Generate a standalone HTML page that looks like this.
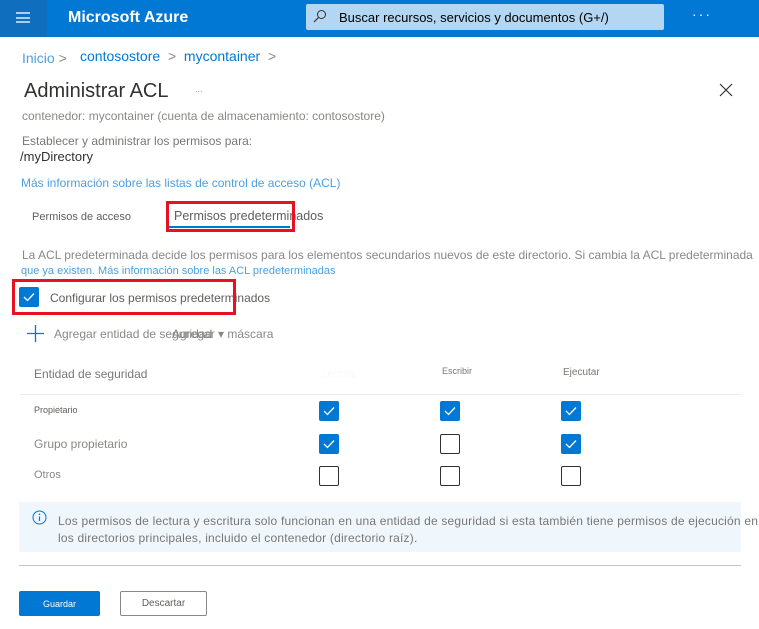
<!DOCTYPE html>
<html><head><meta charset="utf-8"><style>
*{margin:0;padding:0;box-sizing:border-box}
body{width:759px;height:629px;overflow:hidden;background:#fff;font-family:"Liberation Sans",sans-serif;position:relative;color:#323130}
.a{position:absolute;white-space:nowrap}
.cb{position:absolute;width:20px;height:20px;border-radius:2px}
.on{background:#0078d4}
.off{border:1px solid #323130;background:#fff}
.on svg{position:absolute;left:4px;top:5px}
</style></head><body>
<div class="a" style="left:0;top:0;width:759px;height:37px;background:#0078d4"></div>
<div class="a" style="left:0;top:0;width:47px;height:37px;background:#106ebe"></div>
<div class="a" style="left:16px;top:12px;width:14px;height:2px;background:#a9cdee"></div>
<div class="a" style="left:16px;top:17px;width:14px;height:2px;background:#a9cdee"></div>
<div class="a" style="left:16px;top:21px;width:14px;height:2px;background:#a9cdee"></div>
<div class="a" style="left:68px;top:9px;color:#fff;font-size:16px;font-weight:bold">Microsoft Azure</div>
<div class="a" style="left:306px;top:4px;width:358px;height:26px;background:#b3d6f2;border-radius:2px"></div>
<svg class="a" style="left:313px;top:9px" width="14" height="14" viewBox="0 0 14 14"><circle cx="8.5" cy="5.5" r="4" fill="none" stroke="#323130" stroke-width="1"/><path d="M5.5 8.5 L1 13" stroke="#323130" stroke-width="1.2"/></svg>
<div class="a" style="left:339px;top:10px;font-size:13px;color:#000">Buscar recursos, servicios y documentos (G+/)</div>
<div class="a" style="left:692px;top:6px;color:#fff;font-size:14px;letter-spacing:2px">···</div>

<div class="a" style="left:22px;top:50px;font-size:14px;color:#8a8886"><span style="color:#0078d4;opacity:.7">Inicio</span> &gt;</div>
<div class="a" style="left:80px;top:48px;font-size:14px;color:#0078d4">contosostore&nbsp;&nbsp;<span style="color:#8a8886">&gt;</span>&nbsp;&nbsp;mycontainer&nbsp;&nbsp;<span style="color:#8a8886">&gt;</span></div>
<div class="a" style="left:24px;top:80px;font-size:20px;color:#323130">Administrar ACL</div>
<div class="a" style="left:195px;top:84px;font-size:9px;color:#999">...</div>
<svg class="a" style="left:719px;top:83px" width="14" height="14"><path d="M1 1L13 13M13 1L1 13" stroke="#323130" stroke-width="1.2"/></svg>
<div class="a" style="left:22px;top:109px;font-size:12px;color:#8a8886">contenedor: mycontainer (cuenta de almacenamiento: contosostore)</div>
<div class="a" style="left:22px;top:134px;font-size:12px;color:#797775">Establecer y administrar los permisos para:</div>
<div class="a" style="left:20px;top:149px;font-size:13px;color:#323130">/myDirectory</div>
<div class="a" style="left:21px;top:176px;font-size:12px;color:#4d9fdf">Más información sobre las listas de control de acceso (ACL)</div>

<div class="a" style="left:32px;top:211px;font-size:11px;color:#605e5c">Permisos de acceso</div>
<div class="a" style="left:174px;top:209px;font-size:12.5px;color:#605e5c">Permisos predeterminados</div>
<div class="a" style="left:168px;top:226px;width:122px;height:2px;background:#0078d4"></div>
<div class="a" style="left:166px;top:201px;width:129px;height:31px;border:3px solid #e81123"></div>

<div class="a" style="left:22px;top:248px;font-size:12px;color:#8a8886">La ACL predeterminada decide los permisos para los elementos secundarios nuevos de este directorio. Si cambia la ACL predeterminada</div>
<div class="a" style="left:21px;top:265px;font-size:11px;color:#4d9fdf">que ya existen. Más información sobre las ACL predeterminadas</div>
<div class="cb on" style="left:19px;top:287px"><svg width="12" height="10"><path d="M1 5L4.5 8.5L11 1.5" fill="none" stroke="#fff" stroke-width="1.3"/></svg></div>
<div class="a" style="left:50px;top:291px;font-size:12px;color:#605e5c">Configurar los permisos predeterminados</div>
<div class="a" style="left:12px;top:279px;width:224px;height:36px;border:3px solid #e81123"></div>

<svg class="a" style="left:27px;top:325px" width="17" height="17"><path d="M8.5 0V17M0 8.5H17" stroke="#0078d4" stroke-width="1.3"/></svg>
<div class="a" style="left:54px;top:327px;font-size:12px;color:#8a8886">Agregar entidad de seguridad</div>
<div class="a" style="left:172px;top:327px;font-size:12px;color:#8a8886">Agregar ▾ máscara</div>

<div class="a" style="left:34px;top:367px;font-size:12px;color:#797775">Entidad de seguridad</div>
<div class="a" style="left:322px;top:369px;font-size:10px;color:#f8f8f8">Lectura</div>
<div class="a" style="left:442px;top:366px;font-size:9px;color:#797775">Escribir</div>
<div class="a" style="left:563px;top:367px;font-size:10px;color:#797775">Ejecutar</div>
<div class="a" style="left:20px;top:394px;width:721px;height:1px;background:#edebe9"></div>

<div class="a" style="left:34px;top:405px;font-size:9px;color:#605e5c">Propietario</div>
<div class="a" style="left:34px;top:437px;font-size:12px;color:#8a8886">Grupo propietario</div>
<div class="a" style="left:34px;top:469px;font-size:11px;color:#8a8886">Otros</div>

<div class="cb on" style="left:319px;top:401px"><svg width="12" height="10"><path d="M1 5L4.5 8.5L11 1.5" fill="none" stroke="#fff" stroke-width="1.3"/></svg></div>
<div class="cb on" style="left:440px;top:401px"><svg width="12" height="10"><path d="M1 5L4.5 8.5L11 1.5" fill="none" stroke="#fff" stroke-width="1.3"/></svg></div>
<div class="cb on" style="left:561px;top:401px"><svg width="12" height="10"><path d="M1 5L4.5 8.5L11 1.5" fill="none" stroke="#fff" stroke-width="1.3"/></svg></div>
<div class="cb on" style="left:319px;top:434px"><svg width="12" height="10"><path d="M1 5L4.5 8.5L11 1.5" fill="none" stroke="#fff" stroke-width="1.3"/></svg></div>
<div class="cb off" style="left:440px;top:434px"></div>
<div class="cb on" style="left:561px;top:434px"><svg width="12" height="10"><path d="M1 5L4.5 8.5L11 1.5" fill="none" stroke="#fff" stroke-width="1.3"/></svg></div>
<div class="cb off" style="left:319px;top:466px"></div>
<div class="cb off" style="left:440px;top:466px"></div>
<div class="cb off" style="left:561px;top:466px"></div>

<div class="a" style="left:19px;top:502px;width:722px;height:50px;background:#eff6fc"></div>
<svg class="a" style="left:32px;top:510px" width="15" height="15"><circle cx="7.5" cy="7.5" r="6.5" fill="none" stroke="#0078d4" stroke-width="1"/><path d="M7.5 6.5V11" stroke="#0078d4" stroke-width="1.2"/><circle cx="7.5" cy="4.3" r=".8" fill="#0078d4"/></svg>
<div class="a" style="left:58px;top:514px;font-size:12px;letter-spacing:0.2px;color:#797775">Los permisos de lectura y escritura solo funcionan en una entidad de seguridad si esta también tiene permisos de ejecución en</div>
<div class="a" style="left:58px;top:531px;font-size:12px;letter-spacing:0.2px;color:#797775">los directorios principales, incluido el contenedor (directorio raíz).</div>
<div class="a" style="left:19px;top:565px;width:722px;height:1px;background:#c8c6c4"></div>

<div class="a" style="left:19px;top:591px;width:81px;height:25px;background:#0078d4;border-radius:2px;color:#fff;font-size:9px;display:flex;align-items:center;justify-content:center">Guardar</div>
<div class="a" style="left:120px;top:591px;width:87px;height:25px;border:1px solid #8a8886;border-radius:2px;color:#605e5c;font-size:10px;display:flex;align-items:center;justify-content:center">Descartar</div>
</body></html>
